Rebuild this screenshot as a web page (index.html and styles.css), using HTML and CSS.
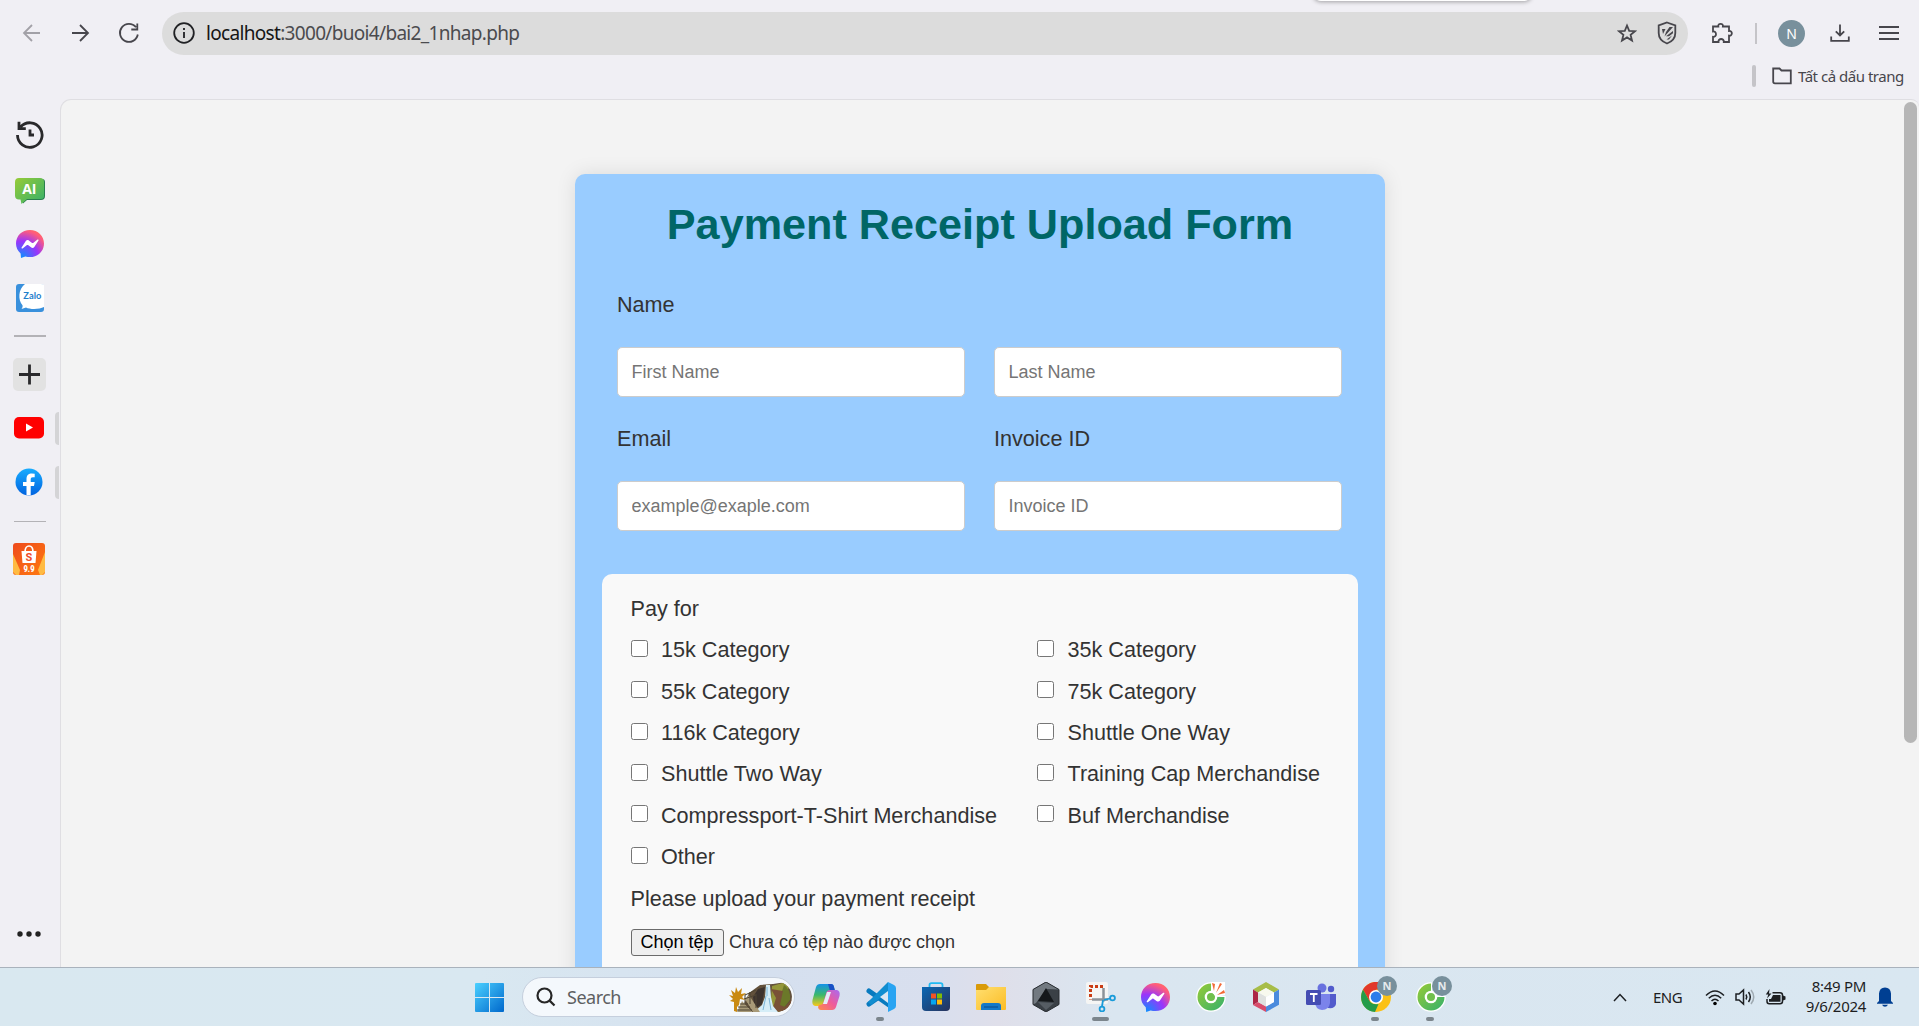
FILE: index.html
```html
<!DOCTYPE html>
<html lang="vi">
<head>
<meta charset="utf-8">
<title>Payment Receipt Upload Form</title>
<link rel="stylesheet" href="styles.css">
</head>
<body>
<svg class="defs" aria-hidden="true">
  <defs>
    <radialGradient id="msg" cx=".2" cy="1" r="1.1"><stop offset="0" stop-color="#0a90ff"/><stop offset=".55" stop-color="#9a35fb"/><stop offset=".9" stop-color="#ff5c7c"/><stop offset="1" stop-color="#ff6a66"/></radialGradient>
    <linearGradient id="grn" x1="0" y1="0" x2="1" y2="1"><stop offset="0" stop-color="#97cb37"/><stop offset="1" stop-color="#35b06c"/></linearGradient>
    <linearGradient id="win" x1="0" y1="0" x2="1" y2="1"><stop offset="0" stop-color="#4bd0ff"/><stop offset="1" stop-color="#0068cc"/></linearGradient>
    <linearGradient id="fb" x1="0" y1="0" x2="0" y2="1"><stop offset="0" stop-color="#18acfe"/><stop offset="1" stop-color="#0163e0"/></linearGradient>
    <linearGradient id="shop" x1="0" y1="0" x2="1" y2="1"><stop offset="0" stop-color="#ee4a1c"/><stop offset="1" stop-color="#ff7a10"/></linearGradient>
    <linearGradient id="cop1" x1="0" y1="0" x2="0" y2="1"><stop offset="0" stop-color="#1593e8"/><stop offset=".5" stop-color="#3bb86b"/><stop offset="1" stop-color="#f8c91c"/></linearGradient>
    <linearGradient id="cop2" x1="1" y1="0" x2="0" y2="1"><stop offset="0" stop-color="#a76af2"/><stop offset=".5" stop-color="#ee5a9b"/><stop offset="1" stop-color="#ff8b48"/></linearGradient>
    <linearGradient id="store" x1="0" y1="0" x2="1" y2="1"><stop offset="0" stop-color="#0b68b5"/><stop offset="1" stop-color="#27325c"/></linearGradient>
    <linearGradient id="fold" x1="0" y1="0" x2="1" y2="1"><stop offset="0" stop-color="#ffdf70"/><stop offset="1" stop-color="#fbbc25"/></linearGradient>
    <symbol id="messenger" viewBox="0 0 28 28"><path fill="url(#msg)" d="M14 0C6 0 0 5.8 0 13.6c0 4 1.6 7.200 4.600 9.900L5 28l4.300-1.500c1.500.4 3.100.6 4.700.6 8 0 14-5.800 14-13.500S22 0 14 0z"/><path fill="#fff" d="M5.600 17.600 9.800 11c.7-1 2-1.300 3-.6l3.300 2.500c.3.200.7.200 1 0l4.400-3.400c.6-.4 1.400.3 1 .9l-4.200 6.600c-.7 1-2 1.300-3 .6L12 15.100c-.3-.2-.7-.2-1 0l-4.400 3.400c-.6.4-1.400-.3-1-.9z"/></symbol>
    <symbol id="coccoc" viewBox="0 0 30 30"><path d="M15 8.500a6.500 6.500 0 1 0 6.500 6.500L28.500 15A13.500 13.500 0 1 1 15 1.500z" fill="url(#grn)" stroke="#fff" stroke-width="2.500" stroke-linejoin="round"/><path d="M15 1.500A13.500 13.500 0 1 0 28.500 15L15 15z" fill="url(#grn)"/><circle cx="15" cy="15" r="6.300" fill="#fff"/><circle cx="15" cy="15" r="4" fill="#70bf4c"/></symbol>
  </defs>
</svg>
<div class="screen">
  <header class="toolbar">
    <svg class="ic back" width="20" height="20" viewBox="0 0 20 20"><path d="M18 10H2M10 2l-8 8 8 8"/></svg>
    <svg class="ic forward" width="20" height="20" viewBox="0 0 20 20"><path d="M2 10h16M10 2l8 8-8 8"/></svg>
    <svg class="ic reload" width="22" height="22" viewBox="0 0 22 22"><path d="M19.800 12.500A9 9 0 1 1 18 5.300M19.300 1.500v6h-6"/></svg>
    <div class="address">
      <svg class="info" width="22" height="22" viewBox="0 0 22 22"><circle cx="11" cy="11" r="9.800"/><path d="M11 10v6M11 6v2"/></svg>
      <span class="url"><b>localhost</b>:3000/buoi4/bai2_1nhap.php</span>
      <svg class="ic star" width="20" height="20" viewBox="0 0 20 20"><path d="M10 2.500l2.200 5.300 5.800.4-4.400 3.700 1.400 5.600-5-3.100-5 3.100 1.400-5.600L2 8.200l5.800-.4z"/></svg>
      <svg class="ic shield" width="20" height="24" viewBox="0 0 20 24"><path d="M10 1.500 18.300 4.500V12c0 5-3.800 8.800-8.300 10.500C5.500 20.800 1.700 17 1.700 12V4.500z"/><path class="solid" d="M5 8h3.500L6 13zM12.500 6H16L7.500 15.500 9 11zM16 10v2.200l-4 3H9zM15 14.500 12 18.500H9.500z"/></svg>
    </div>
    <svg class="ic puzzle" width="24" height="24" viewBox="0 0 24 24"><path d="M3 5.500h5.300c-.6-3.600 5.200-3.600 4.600 0H19V10c3.800-.6 3.800 5.200 0 4.600V21h-5.200c.5-4-5.800-4-5.300 0H3v-5.200c4 .5 4-5.800 0-5.300z"/></svg>
    <i class="sep"></i>
    <span class="avatar">N</span>
    <svg class="ic download" width="20" height="20" viewBox="0 0 20 20"><path d="M10 1.500v11M5.800 8.300l4.200 4.200 4.200-4.200M1.200 13.500v4.300h17.600v-4.300"/></svg>
    <svg class="ic menu" width="22" height="16" viewBox="0 0 22 16"><path d="M1 2h20M1 8h20M1 14h20"/></svg>
  </header>
  <div class="bookmarks">
    <i class="sep thick"></i>
    <svg class="ic" width="20" height="18" viewBox="0 0 20 18"><path d="M1.200 14.500v-13h6.300l2 2h9.300v12.800H3q-1.800 0-1.800-1.800z"/></svg>
    <span>Tất cả dấu trang</span>
  </div>
  <i class="popup-edge"></i>

  <div class="middle">
    <nav class="sidebar">
      <svg class="history" width="28" height="28" viewBox="0 0 28 28"><path d="M1.500 14A12.300 12.300 0 1 0 4.500 6M3 .8v6.800h6.800M14 8.500V14h4"/></svg>
      <svg class="ai" width="30" height="26" viewBox="0 0 30 26"><path fill="#2a7e4f" d="M5 1h22q3 0 3 3v14q0 4-4 4H12l-4 3.500z"/><path fill="url(#grn)" d="M4 0h21q4 0 4 4v14q0 3-3 3H12l-5.500 5-1-4.500H4q-4 0-4-4V4q0-4 4-4z"/><text x="14.300" y="15.700" text-anchor="middle">AI</text></svg>
      <svg class="side-msg" width="28" height="28"><use href="#messenger"/></svg>
      <svg class="zalo" width="28" height="28" viewBox="0 0 28 28"><rect width="28" height="28" rx="3" fill="#3990dc"/><path fill="#fff" d="M28 1v22c-4.500 2.500-14 2.600-18 .5L5.500 25c1-1.500 1.300-2.500 1-3.800C1.800 16 2.200 5 9 0h16q3 0 3 1z"/><text x="16.300" y="15" text-anchor="middle" textLength="18" lengthAdjust="spacingAndGlyphs">Zalo</text></svg>
      <i class="rule"></i>
      <svg class="plus" width="33" height="33" viewBox="0 0 33 33"><rect width="33" height="33" rx="5" fill="#e2e2e2"/><path d="M16.500 6.500v20M6 16.500h21"/></svg>
      <div class="tabrow yt"><svg width="30" height="22" viewBox="0 0 30 22"><rect width="30" height="21.500" rx="5" fill="#f00"/><path fill="#fff" d="M12 6.500v8l7-4z"/></svg><i></i></div>
      <div class="tabrow fb"><svg width="28" height="28" viewBox="0 0 28 28"><circle cx="14" cy="14" r="13.500" fill="url(#fb)"/><path fill="#fff" d="M11.500 27.200V18H8v-4h3.500v-3c0-3.600 2.200-5.400 5.300-5.400l2.900.2V9.300h-1.800c-1.700 0-2.200.9-2.200 2.100V14h4l-.7 4h-3.300v9.200q-2 .3-4.200 0z"/></svg><i></i></div>
      <i class="rule thin"></i>
      <svg class="shopee" width="32" height="32" viewBox="0 0 32 32"><rect width="32" height="32" rx="3" fill="url(#shop)"/><path fill="#ffba42" d="M0 11 7 27 6 32H3L0 29zM32 9 25 27l2 5h2l3-3z"/><path fill="#fff" d="M8.500 8h15l-1 12h-13z"/><path d="M12 9c0-8 8-8 8 0" fill="none" stroke="#fff" stroke-width="1.700"/><text class="s" x="16" y="18" text-anchor="middle">S</text><text class="n" x="16" y="29" text-anchor="middle" textLength="11" lengthAdjust="spacingAndGlyphs">9.9</text></svg>
      <svg class="dots" width="24" height="6" viewBox="0 0 24 6"><circle cx="3" cy="3" r="2.700"/><circle cx="12" cy="3" r="2.700"/><circle cx="21" cy="3" r="2.700"/></svg>
    </nav>

    <main class="page">
      <form class="card">
        <h1>Payment Receipt Upload Form</h1>
        <div class="fields">
          <label class="wide">Name</label>
          <input type="text" placeholder="First Name">
          <input type="text" placeholder="Last Name">
          <label>Email</label>
          <label>Invoice ID</label>
          <input type="text" placeholder="example@exaple.com">
          <input type="text" placeholder="Invoice ID">
        </div>
        <section class="pay">
          <p>Pay for</p>
          <div class="options">
            <label><input type="checkbox">15k Category</label>
            <label><input type="checkbox">35k Category</label>
            <label><input type="checkbox">55k Category</label>
            <label><input type="checkbox">75k Category</label>
            <label><input type="checkbox">116k Category</label>
            <label><input type="checkbox">Shuttle One Way</label>
            <label><input type="checkbox">Shuttle Two Way</label>
            <label><input type="checkbox">Training Cap Merchandise</label>
            <label><input type="checkbox">Compressport-T-Shirt Merchandise</label>
            <label><input type="checkbox">Buf Merchandise</label>
            <label><input type="checkbox">Other</label>
          </div>
          <p>Please upload your payment receipt</p>
          <div class="file"><button type="button">Chọn tệp</button><span>Chưa có tệp nào được chọn</span></div>
        </section>
      </form>
      <i class="scrollbar"></i>
    </main>
  </div>

  <footer class="taskbar">
    <div class="apps">
      <svg class="start" width="29" height="29" viewBox="0 0 29 29"><path fill="url(#win)" d="M1 0h13v14H0V1q0-1 1-1zM15 0h13q1 0 1 1v13H15zM0 15h14v14H1q-1 0-1-1zM15 15h14v13q0 1-1 1H15z"/></svg>
      <div class="search">
        <svg width="20" height="20" viewBox="0 0 20 20"><circle cx="8.500" cy="8.500" r="7"/><path d="M13.600 13.600 18.500 18.500"/></svg>
        <span>Search</span>
        <svg class="scene" width="63" height="30" viewBox="0 0 63 30"><path fill="#62513c" d="M20 11 31 3 44 2 57 0q6 5 6 14 0 13-12 16H23l-8-8z"/><path fill="#3c332e" d="M29 7 36 5 33 22 26 27 24 15z"/><path fill="#94973a" d="M43 4 57 0l3 5-9 25h-8l-1-13z"/><path fill="#6b7829" d="M55 3q7 4 6 15l-8 10-5-3z"/><path fill="#795137" d="M42 7 47 16 43 29l7 1q12-2 13-13l-7 8-5-2 3-14z"/><path fill="#d5edf7" d="M37 3h4l1 12 2 9 5 6H25l8-7 3-8z"/><path d="M37 14l-3 14M40 16l2 12M38 5v9" stroke="#7bb4d5" fill="none"/><path fill="#a89a78" d="M13 19l10 11H8zM20 13l11 17h-7L16 17z"/><path d="M11 22h8M9 25h12M8 28h15M15 17l12-4M16 21V12M21 22V10M27 26V12M16 13l11-5" stroke="#4f4432" fill="none"/><path fill="#c98a12" d="M5 29V20l-4-1 3-2-4-4 4 1-2-6 4 3 1-6 2 5 4-4-1 6 5-1-4 4 3 3-5-1-1 6-2 2v5z"/></svg>
      </div>
      <div class="app"><svg width="30" height="30" viewBox="0 0 30 30"><path fill="url(#cop1)" d="M9 2h11q2.500 0 3 3l1 4h-5c-2 0-3 1-3.500 3l-2.700 9q-.8 3-4 3H4Q.5 23 1.500 18L5 5q1-3 4-3z"/><path fill="#1950c5" d="M17 2h3q2.500 0 3 3l1 4h-5z"/><path fill="url(#cop2)" d="M21 28H10q-2.500 0-3-3l1-2c3 0 4-1 4.500-3l2.700-9q.8-3 4-3H26q3.500 1 2.500 6L25 25q-1 3-4 3z"/><path fill="#e4edf8" d="M16 10h4l-4 12h-4z"/></svg></div>
      <div class="app"><svg width="30" height="30" viewBox="0 0 30 30"><path d="M23 8 3 22M3 9l20 14" stroke="#087abf" stroke-width="5" stroke-linecap="round"/><path fill="#118dd0" d="M22 0 2 20l3 3L22 10z"/><path fill="#29a4f2" d="M22 0l6 3q2 1 2 3v18q0 2-2 3l-6 3z"/><path fill="#dbe7f3" d="M22 9v12l-8-6z"/></svg><i></i></div>
      <div class="app"><svg width="30" height="30" viewBox="0 0 30 30"><path d="M8.500 6V3q0-1.800 2-1.800h9q2 0 2 1.800v3" fill="none" stroke="#20baf3" stroke-width="1.800"/><path fill="url(#store)" d="M1 5h28v20q0 4-4 4H5q-4 0-4-4z"/><path fill="#f35325" d="M10 11.500h5v5h-5z"/><path fill="#81bc06" d="M16 11.500h5v5h-5z"/><path fill="#05a6f0" d="M10 17.500h5v5h-5z"/><path fill="#ffba08" d="M16 17.500h5v5h-5z"/></svg></div>
      <div class="app"><svg width="30" height="30" viewBox="0 0 30 30"><path fill="#d99a08" d="M0 3q0-1 1-1h9l3 3h17v7H0z"/><path fill="url(#fold)" d="M0 8h10l3-3h17v22q0 1-1 1H1q-1 0-1-1z"/><path fill="#1479c8" d="M5 28v-4q0-3 3-3h14q3 0 3 3v4z"/><path d="M8 25h14" stroke="#0a4c8a"/></svg></div>
      <div class="app"><svg width="30" height="30" viewBox="0 0 30 30"><path fill="#3a4046" d="M15 0 28 7.500v15L15 30 2 22.500v-15z"/><path fill="#727980" d="M15 0 28 7.500 15 7 5 21 2 22.500v-15z"/><path fill="#15181b" d="M15 6 23 20 7 19z"/><path fill="#565d64" d="M7 20l16 1-8 7z"/><path d="M15 0 28 7.500v15L15 30 2 22.500v-15z" fill="none" stroke="#292d31"/></svg></div>
      <div class="app"><svg width="30" height="30" viewBox="0 0 30 30"><rect width="22" height="22" rx="2" fill="#f5f5f4"/><path d="M17 4.500H4.500v13" fill="none" stroke="#ca3c14" stroke-width="3" stroke-dasharray="3 2"/><path d="M17.500 6v13.500M6 17.500h16" stroke="#8c9399" stroke-width="2.500"/><circle cx="26.500" cy="16" r="2.400"/><circle cx="16" cy="27" r="2.400"/><path class="cut" d="M16 24.500 17 18M24 16.500l-6 1.500"/></svg><i class="active"></i></div>
      <div class="app"><svg width="29" height="29"><use href="#messenger"/></svg></div>
      <div class="app"><svg width="30" height="30" viewBox="0 0 30 30"><use href="#coccoc"/><path fill="#dbe6f1" d="M18 10 21 0h9v13l-9 2z"/><path fill="#fff" d="M15 9V0h14v13l-9 2z"/><path fill="#f36a37" d="M16 1l3 1-1 7zM24 1l2 1-6 9zM28 8l1 3-8 2z"/></svg></div>
      <div class="app"><svg width="30" height="30" viewBox="0 0 30 30"><path fill="#a7bd48" d="M15 0 28 7.500l-5 3L15 6l-8 4.500-5-3z"/><path fill="#ad2645" d="M2 7.500l5 3v9.500l-5 3z"/><path fill="#d84c6b" d="M2 23l5-3 8 4.500V30z"/><path fill="#4b8bdd" d="M28 7.500v15.200L15 30v-5.500l8-4.500v-9.500z"/><path fill="#f8f9ee" d="M15 6l8 4.500-8 4.500-8-4.500z"/><path fill="#dfe1df" d="M7 10.500l8 4.500v9.500L7 20z"/><path fill="#fff" d="M23 10.500 15 15v9.500l8-4.500z"/></svg></div>
      <div class="app"><svg width="30" height="30" viewBox="0 0 30 30"><circle cx="16" cy="6" r="4.500" fill="#6871df"/><circle cx="25" cy="7" r="3.200" fill="#515bcc"/><path fill="#525bcc" d="M20 12h10v10q-1 5-8 4z"/><path fill="#7b83eb" d="M9 12h15v9q-1 7-8 7-7-1-7-8z"/><rect y="8" width="15" height="15" rx="1.500" fill="#454db3"/><path d="M4 12h7.500M7.800 12v8" stroke="#fff" stroke-width="1.800"/></svg></div>
      <div class="app"><svg width="30" height="30" viewBox="0 0 30 30"><circle cx="15" cy="15" r="15" fill="#fbc116"/><path fill="#e2382b" d="M2 7.500C8-2.500 22-2.500 28 7.500H15L8.500 19z"/><path fill="#249c4a" d="M2 7.500 8.500 19q3 4 9 3L14 30C2 29-3 17 2 7.500z"/><circle cx="15" cy="15" r="7" fill="#fff"/><circle cx="15" cy="15" r="5.400" fill="#2c7ceb"/></svg><b>N</b><i></i></div>
      <div class="app"><svg width="30" height="30" viewBox="0 0 30 30"><use href="#coccoc"/></svg><b>N</b><i></i></div>
    </div>
    <div class="tray">
      <svg class="chev" width="14" height="9" viewBox="0 0 14 9"><path d="M1 8l6-6.500L13 8"/></svg>
      <span class="lang">ENG</span>
      <svg class="wifi" width="20" height="17" viewBox="0 0 20 17"><path d="M1 6.500q9-9 18 0M3.800 9.300q6.200-6 12.400 0M6.500 12q3.500-3.500 7 0"/><circle cx="10" cy="14.500" r="1.800"/></svg>
      <svg class="vol" width="20" height="18" viewBox="0 0 20 18"><path d="M1 6h3l4.500-4v14L4 12H1zM11 6.500q1.500 2.500 0 5M13.500 4q3.500 5 0 10"/><path opacity=".3" d="M16 2q5.500 7 0 14"/></svg>
      <svg class="bat" width="21" height="17" viewBox="0 0 21 17"><path d="M7.500 3.800H15q2.500 0 2.500 2.500v6q0 2.500-2.500 2.500H4.200Q2 14.800 2 12.300V10" /><path class="solid" d="M8 6h7.500v6.800H4V10h2zM18 6.500l2.500 1v3l-2.500 1zM4.500 0 .8 5.500h2.500L2 9.500l4.500-5H4z"/></svg>
      <div class="clock">8:49 PM<br>9/6/2024</div>
      <svg class="bell" width="16" height="20" viewBox="0 0 16 20"><path d="M2 14V6.500Q2.500.5 8 .5t6 6V14l2 2v.7H0V16zM5 17.700h6Q10 19.800 8 19.800T5 17.700z"/></svg>
    </div>
  </footer>
</div>
</body>
</html>
```
FILE: styles.css
```css
* { box-sizing: border-box; }
body { margin: 0; overflow: hidden; background: #f0eff4; }
svg { display: block; flex: none; }
.defs { position: absolute; width: 0; height: 0; }
.screen { width: 1919px; height: 1026px; display: flex; flex-direction: column; font-family: "Noto Sans", "Open Sans", sans-serif; color: #1d1d1f; position: relative; }

/* browser toolbar */
.toolbar { height: 55px; padding: 12px 19px 0 22px; display: flex; align-items: center; flex: none; }
.toolbar > .ic, .toolbar > .avatar { margin-bottom: 1px; }
.ic { fill: none; stroke: #47464c; stroke-width: 1.800; }
.ic .solid { fill: #47464c; stroke: none; }
.back { stroke: #a2a1a7; }
.forward { margin-left: 28px; }
.reload { margin-left: 28px; }
.address { margin-left: 22px; width: 1526px; height: 43px; border-radius: 22px; background: #dcdcdc; display: flex; align-items: center; padding: 0 11px 1px; flex: none; }
.info { fill: none; stroke: #202124; stroke-width: 1.800; }
.url { flex: 1; margin-left: 11px; font: 19px/28px "Noto Sans", sans-serif; letter-spacing: -.68px; color: #4b4b4e; }
.url b { font-weight: 400; color: #151515; }
.shield { margin-left: 20px; }
.puzzle { margin-left: 22px; }
.sep { width: 2px; height: 21px; background: #c5c4c8; margin-left: 21px; flex: none; }
.avatar { width: 27px; height: 27px; margin-left: 21px; border-radius: 50%; background: #78909c; color: #fff; font-size: 14px; line-height: 27px; text-align: center; flex: none; }
.download { margin-left: 25px; }
.menu { margin-left: 28px; }
.bookmarks { height: 44px; display: flex; align-items: center; justify-content: flex-end; padding: 0 14px 2px 0; flex: none; font-size: 15px; color: #47464c; }
.bookmarks .thick { width: 4px; height: 22px; border-radius: 2px; margin: 0 16px 0 0; }
.bookmarks span { margin-left: 6px; width: 107px; white-space: nowrap; letter-spacing: -.48px; }
.popup-edge { position: absolute; left: 1313px; top: -8px; width: 219px; height: 9px; border-radius: 0 0 8px 8px; background: #fff; box-shadow: 0 1px 4px #0005; }

/* browser sidebar */
.middle { flex: 1; min-height: 0; display: flex; }
.sidebar { width: 60px; display: flex; flex-direction: column; align-items: flex-start; padding: 22px 0 30px 16px; flex: none; }
.history, .plus { fill: none; stroke: #29292b; stroke-width: 2.800; }
.history { height: 28px; }
.ai { margin: 29px 0 0 -1px; }
.ai text { font: 700 14px "Open Sans", sans-serif; fill: #fff; }
.side-msg, .zalo { margin-top: 26px; }
.zalo text { font: 700 9px Lato, sans-serif; fill: #1f80cc; }
.rule { width: 32px; height: 2px; background: #b3b2b6; margin: 23px 0 0 -2px; }
.plus { margin: 21px 0 0 -3px; }
.plus rect { stroke: none; }
.tabrow { height: 33px; display: flex; align-items: center; justify-content: space-between; padding-bottom: 1px; }
.tabrow i { width: 4px; height: 33px; background: #d4d4d6; border-radius: 4px 0 0 4px; }
.yt { margin-top: 21px; margin-left: -2px; width: 45px; }
.fb { margin-top: 21px; margin-left: -1px; width: 44px; }
.thin { height: 1px; margin-top: 22px; }
.shopee { margin: 21px 0 0 -3px; }
.shopee .s { font: 700 11px Roboto, sans-serif; fill: #ee4d2d; }
.shopee .n { font: 900 9px Roboto, sans-serif; fill: #fff; }
.dots { margin: auto 0 0 1px; fill: #222; }

/* web page */
.page { flex: 1; overflow: hidden; background: #f3f3f3; border: 1px solid #dfdee2; border-width: 1px 0 0 1px; border-radius: 11px 8px 0 0; display: flex; justify-content: space-between; font-family: "Liberation Sans", Arial, sans-serif; color: #333; }
.card { width: 810px; height: 1050px; margin: 74px 0 0 514px; padding: 25px 27px 0; background: #99ccff; border-radius: 10px; box-shadow: 0 0 20px rgba(0,0,0,.1); flex: none; }
h1 { margin: 0; font-size: 43.200px; line-height: 50px; text-align: center; color: #066; white-space: nowrap; }
.fields { display: grid; grid-template-columns: 348px 348px; column-gap: 29px; padding: 0 15px; margin-top: 43px; font-size: 21.600px; line-height: 25px; }
.fields .wide { grid-column: span 2; }
.fields input { height: 50px; margin: 30px 0 29px; padding: 0 13.500px; border: 1px solid #ccc; border-radius: 5px; background: #fff; font: 18px "Liberation Sans", Arial, sans-serif; }
.fields input::placeholder { color: #757575; }
.pay { margin-top: 14px; height: 500px; padding: 13.800px 28.500px 0; border-radius: 10px; background: #f9f9f9; font-size: 21.600px; line-height: 41.400px; }
.pay p { margin: 0; }
.options { display: grid; grid-template-columns: 406.500px 1fr; grid-auto-rows: 41.400px; white-space: nowrap; }
.options label { display: flex; align-items: center; }
.options input { width: 17px; height: 17px; margin: 0 13.500px 3px 0; }
.file { display: flex; align-items: center; margin-top: 10px; font-size: 18px; line-height: 27px; }
.file button { width: 93px; height: 27px; padding: 0; border: 1px solid #6b6b6b; border-radius: 3px; background: #efefef; color: #000; font: 18px/24px "Liberation Sans", Arial, sans-serif; }
.file span { margin-left: 5.500px; white-space: nowrap; }
.scrollbar { width: 13px; height: 641px; border-radius: 7px; background: #b6b6b6; margin: 2px 2px 0 0; }

/* taskbar */
.taskbar { height: 59px; flex: none; border-top: 1px solid #a9b2bc; display: flex; align-items: center; justify-content: space-between; background: linear-gradient(90deg, #d9e8f0 0%, #d9e8f1 25%, #d5e0ef 40%, #d9dfee 49%, #dfdfea 52%, #dae6f0 58%, #d9e7f1 100%); }
.apps { display: flex; align-items: center; margin-left: 475px; height: 58px; }
.search { width: 273px; height: 40px; margin: 0 3px 0 18px; border: 1px solid #c5cfdd; border-radius: 20px; background: #f4f8fc; display: flex; align-items: center; padding-left: 13px; }
.search > svg:first-child { fill: none; stroke: #262626; stroke-width: 2.200; }
.search span { margin-left: 11px; width: 162px; font: 18px "Noto Sans", sans-serif; letter-spacing: -.5px; color: #5d5f62; }
.scene { border-radius: 0 15px 15px 0; }
.app { width: 55px; height: 58px; display: flex; align-items: center; justify-content: center; position: relative; }
.app i { position: absolute; left: 23px; bottom: 5px; width: 8px; height: 4px; border-radius: 2px; background: #7b858c; }
.app i.active { left: 19px; width: 17px; }
.app b { position: absolute; left: 29px; top: 8px; width: 20px; height: 20px; border-radius: 50%; background: #78909c; color: #e6eaec; font: 700 11px/20px "Open Sans", sans-serif; text-align: center; }
.app circle:not([fill]), .cut { fill: none; stroke: #199bd9; stroke-width: 1.800; }
.tray { display: flex; align-items: center; margin-right: 26px; font-size: 15px; }
.chev, .wifi path, .vol, .bat { fill: none; stroke: #1c1f22; stroke-width: 1.500; }
.bat .solid { fill: #1c1f22; stroke: none; }
.lang { margin-left: 26px; width: 30px; letter-spacing: -.5px; }
.wifi { margin-left: 22px; }
.vol { margin-left: 10px; }
.bat { margin-left: 10px; }
.clock { width: 80px; text-align: right; line-height: 20px; letter-spacing: -.3px; margin-right: 11px; padding-bottom: 3px; white-space: nowrap; }
.bell { fill: #003f92; }
```
